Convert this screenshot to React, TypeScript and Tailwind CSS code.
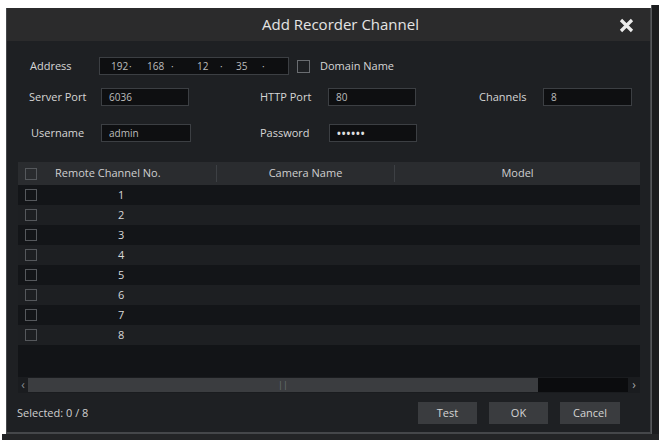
import React from "react";

const font = { fontFamily: '"Open Sans", "Liberation Sans", sans-serif' };

function Box({ className = "" }: { className?: string }) {
  return <span className={`block h-[12px] w-[12px] border border-[#55585c] ${className}`} />;
}

function Input({ w, children }: { w: string; children?: React.ReactNode }) {
  return (
    <div className={`${w} flex h-[18px] items-center border border-[#3c3f43] bg-[#0e0f11] pl-[7px] text-[10px] text-[#bdbdbd]`}>
      {children}
    </div>
  );
}

const rows = [1, 2, 3, 4, 5, 6, 7, 8];

export default function App() {
  return (
    <div className="flex h-[440px] w-[659px] flex-col bg-white" style={font}>
      <div className="flex h-[434px] pt-[8px]">
        {/* dialog */}
        <div className="ml-[6px] flex h-[426px] w-[645px] flex-col border-b-2 border-l border-r border-[#45474a] bg-[#1e2023]">
          {/* title bar */}
          <div className="relative flex h-[33px] shrink-0 items-center justify-center bg-[#2b2b2c]">
            <span className="ml-[24px] text-[15px] text-[#e4e4e4]">Add Recorder Channel</span>
            <svg className="absolute right-[16px] top-[10px]" width="15" height="15" viewBox="0 0 15 15">
              <path d="M2 2 L13 13 M13 2 L2 13" stroke="#ececec" strokeWidth="3.2" />
            </svg>
          </div>

          {/* body */}
          <div className="flex flex-1 flex-col px-[11px] pt-[16px] text-[11px] text-[#d6d6d6]">
            {/* address row */}
            <div className="flex h-[18px] items-center pl-[12px]">
              <span className="w-[69px]">Address</span>
              <div className="relative flex h-[18px] w-[190px] items-center border border-[#3c3f43] bg-[#0e0f11] text-[10px] text-[#bdbdbd]">
                <span className="absolute left-[11px]">192</span>
                <span className="absolute left-[29px]">·</span>
                <span className="absolute left-[47px]">168</span>
                <span className="absolute left-[71px]">·</span>
                <span className="absolute left-[97px]">12</span>
                <span className="absolute left-[120px]">·</span>
                <span className="absolute left-[136px]">35</span>
                <span className="absolute left-[162px]">·</span>
              </div>
              <span className="ml-[8px] block h-[13px] w-[13px] border border-[#6a6d71]" />
              <span className="ml-[10px]">Domain Name</span>
            </div>

            {/* port row */}
            <div className="mt-[13px] flex h-[18px] items-center pl-[11px]">
              <span className="w-[72px]">Server Port</span>
              <Input w="w-[88px]">6036</Input>
              <span className="ml-[71px] w-[68px]">HTTP Port</span>
              <Input w="w-[88px]">80</Input>
              <span className="ml-[63px] w-[64px]">Channels</span>
              <Input w="w-[89px]">8</Input>
            </div>

            {/* user row */}
            <div className="mt-[18px] flex h-[18px] items-center pl-[13px]">
              <span className="w-[70px]">Username</span>
              <Input w="w-[90px]">admin</Input>
              <span className="ml-[69px] w-[69px]">Password</span>
              <Input w="w-[88px]">
                <span className="tracking-[1px] text-[10px] font-bold text-[#e0e0e0]">••••••</span>
              </Input>
            </div>

            {/* table */}
            <div className="mt-[20px] flex w-[622px] flex-col bg-[#141619]">
              <div className="flex h-[23px] items-center bg-[#2a2c2f] text-[#cfcfcf]">
                <div className="flex w-[199px] items-center border-r border-[#3d4044] pl-[7px]">
                  <Box />
                  <span className="ml-[18px]">Remote Channel No.</span>
                </div>
                <div className="w-[178px] border-r border-[#3d4044] text-center">Camera Name</div>
                <div className="flex-1 text-center">Model</div>
              </div>
              {rows.map((n) => (
                <div
                  key={n}
                  className={`flex h-[20px] items-center ${n % 2 === 1 ? "bg-[#131518]" : "bg-[#1d1f22]"}`}
                >
                  <div className="flex w-[199px] items-center pl-[7px]">
                    <Box />
                    <span className="ml-[81px] text-[#d8d8d8]">{n}</span>
                  </div>
                </div>
              ))}
              <div className="h-[32px] bg-[#121417]" />
              {/* scrollbar */}
              <div className="flex h-[16px] items-center bg-[#1a1c1f] text-[12px] text-[#8a8c8f]">
                <span className="w-[10px] text-center leading-none">‹</span>
                <div className="relative flex h-[14px] w-[510px] items-center justify-center bg-[#3b3d40] text-[9px] text-[#6e7073]">
                  ||
                </div>
                <div className="h-[14px] w-[90px] bg-[#0b0c0e]" />
                <span className="flex-1 text-center leading-none text-[#a2a4a7]">›</span>
              </div>
            </div>

            {/* footer */}
            <div className="mt-[9px] flex h-[22px] w-[622px] items-center">
              <span className="-ml-[1px] text-[#cfcfcf]">Selected: 0 / 8</span>
              <div className="ml-auto mr-[20px] flex gap-[12px]">
                <button className="h-[22px] w-[59px] bg-[#3a3c3f] text-[11px] text-[#d4d4d4]">Test</button>
                <button className="h-[22px] w-[59px] bg-[#3a3c3f] text-[11px] text-[#d4d4d4]">OK</button>
                <button className="h-[22px] w-[60px] bg-[#3a3c3f] text-[11px] text-[#d4d4d4]">Cancel</button>
              </div>
            </div>
          </div>
        </div>
        <div className="mt-[-3px] flex-1 border-l border-[#55575a] bg-[#1b1c1e]" />
      </div>
      <div className="ml-[2px] h-[6px] bg-[#232426]" />
    </div>
  );
}
